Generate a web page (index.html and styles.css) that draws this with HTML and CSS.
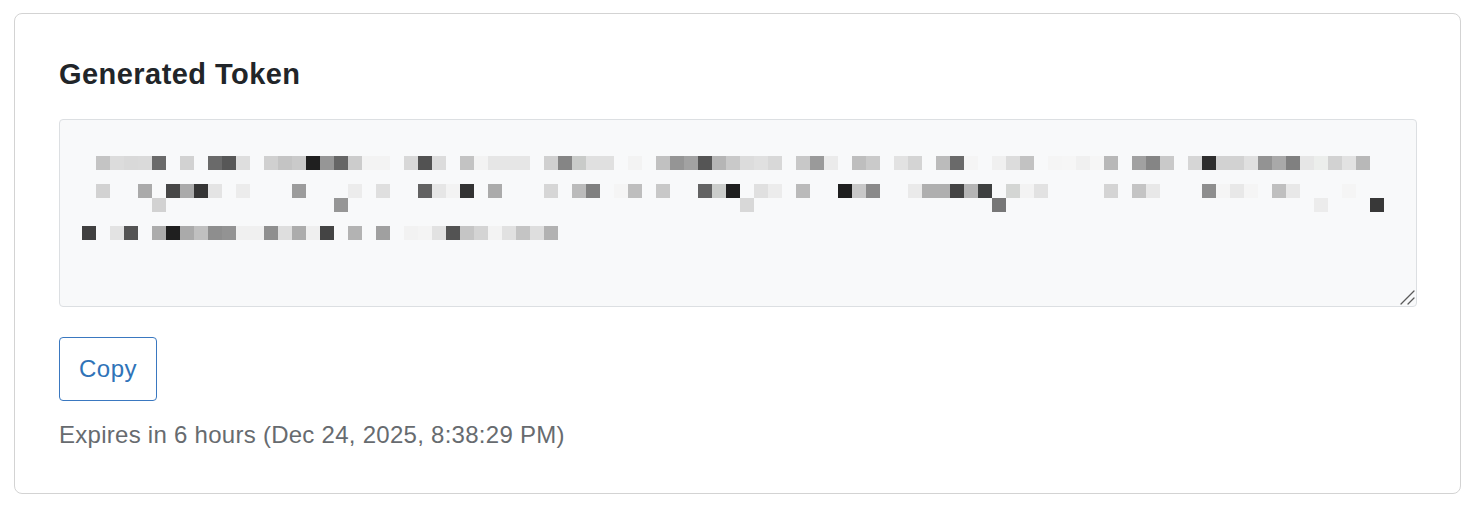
FILE: index.html
```html
<!DOCTYPE html>
<html lang="en">
<head>
<meta charset="utf-8">
<title>Generated Token</title>
<link rel="stylesheet" href="styles.css">
</head>
<body>
<section class="card">
  <h2 class="card-title">Generated Token</h2>
  <div class="token-box" role="textbox" aria-readonly="true" aria-label="Token (redacted)">
    <svg class="mosaic" width="1302" height="84" viewBox="0 0 1302 84" aria-hidden="true">
      <g class="row" transform="translate(0,0)">
        <rect x="14" width="14" height="14" fill="#c4c4c4"/><rect x="28" width="14" height="14" fill="#dcdcdc"/><rect x="42" width="14" height="14" fill="#d9d9d9"/><rect x="56" width="14" height="14" fill="#dadada"/><rect x="70" width="14" height="14" fill="#6a6a6a"/>
        <rect x="98" width="14" height="14" fill="#d2d2d2"/>
        <rect x="126" width="14" height="14" fill="#6a6a6a"/><rect x="140" width="14" height="14" fill="#575757"/><rect x="154" width="14" height="14" fill="#dedede"/>
        <rect x="182" width="14" height="14" fill="#d0d0d0"/><rect x="196" width="14" height="14" fill="#c4c4c4"/><rect x="210" width="14" height="14" fill="#cacaca"/><rect x="224" width="14" height="14" fill="#1f1f1f"/><rect x="238" width="14" height="14" fill="#969696"/><rect x="252" width="14" height="14" fill="#666666"/><rect x="266" width="14" height="14" fill="#cccccc"/><rect x="280" width="14" height="14" fill="#f3f3f3"/><rect x="294" width="14" height="14" fill="#f3f3f3"/>
        <rect x="322" width="14" height="14" fill="#d8d8d8"/><rect x="336" width="14" height="14" fill="#525252"/><rect x="350" width="14" height="14" fill="#dcdcdc"/>
        <rect x="378" width="14" height="14" fill="#c3c3c3"/><rect x="392" width="14" height="14" fill="#f3f3f3"/><rect x="406" width="14" height="14" fill="#e6e6e6"/><rect x="420" width="14" height="14" fill="#e6e6e6"/><rect x="434" width="14" height="14" fill="#e6e6e6"/>
        <rect x="462" width="14" height="14" fill="#d0d0d0"/><rect x="476" width="14" height="14" fill="#858585"/><rect x="490" width="14" height="14" fill="#c9cbc9"/><rect x="504" width="14" height="14" fill="#e0e0e0"/><rect x="518" width="14" height="14" fill="#e0e0e0"/>
        <rect x="546" width="14" height="14" fill="#f3f3f3"/>
        <rect x="574" width="14" height="14" fill="#c1c1c1"/><rect x="588" width="14" height="14" fill="#959595"/><rect x="602" width="14" height="14" fill="#a2a2a2"/><rect x="616" width="14" height="14" fill="#555555"/><rect x="630" width="14" height="14" fill="#b5b5b5"/><rect x="644" width="14" height="14" fill="#c9c9c9"/><rect x="658" width="14" height="14" fill="#dcdcdc"/><rect x="672" width="14" height="14" fill="#e0e0e0"/><rect x="686" width="14" height="14" fill="#d8d8d8"/>
        <rect x="714" width="14" height="14" fill="#c8c8c8"/><rect x="728" width="14" height="14" fill="#9a9a9a"/><rect x="742" width="14" height="14" fill="#ebebeb"/>
        <rect x="770" width="14" height="14" fill="#bebebe"/><rect x="784" width="14" height="14" fill="#cacaca"/>
        <rect x="812" width="14" height="14" fill="#e2e2e2"/><rect x="826" width="14" height="14" fill="#d4d4d4"/>
        <rect x="854" width="14" height="14" fill="#bbbbbb"/><rect x="868" width="14" height="14" fill="#6a6a6a"/><rect x="882" width="14" height="14" fill="#f5f5f5"/>
        <rect x="910" width="14" height="14" fill="#f0f0f0"/><rect x="924" width="14" height="14" fill="#dcdcdc"/><rect x="938" width="14" height="14" fill="#c2c2c2"/>
        <rect x="966" width="14" height="14" fill="#f5f5f5"/><rect x="980" width="14" height="14" fill="#f6f6f6"/><rect x="994" width="14" height="14" fill="#f0f0f0"/><rect x="1008" width="14" height="14" fill="#f6f6f6"/><rect x="1022" width="14" height="14" fill="#b8b8b8"/>
        <rect x="1050" width="14" height="14" fill="#a1a1a1"/><rect x="1064" width="14" height="14" fill="#858585"/><rect x="1078" width="14" height="14" fill="#c9c9c9"/>
        <rect x="1106" width="14" height="14" fill="#d6d6d6"/><rect x="1120" width="14" height="14" fill="#2e2e2e"/><rect x="1134" width="14" height="14" fill="#d2d2d2"/><rect x="1148" width="14" height="14" fill="#d2d2d2"/><rect x="1162" width="14" height="14" fill="#e0e0e0"/><rect x="1176" width="14" height="14" fill="#939393"/><rect x="1190" width="14" height="14" fill="#a9a9a9"/><rect x="1204" width="14" height="14" fill="#808080"/><rect x="1218" width="14" height="14" fill="#e6e6e6"/><rect x="1232" width="14" height="14" fill="#eceeec"/><rect x="1246" width="14" height="14" fill="#d2d2d2"/><rect x="1260" width="14" height="14" fill="#e2e2e2"/><rect x="1274" width="14" height="14" fill="#b8b8b8"/>
      </g>
      <g class="row" transform="translate(0,28)">
        <rect x="14" width="14" height="14" fill="#d2d2d2"/><rect x="56" width="14" height="14" fill="#aaaaaa"/><rect x="84" width="14" height="14" fill="#474747"/><rect x="98" width="14" height="14" fill="#aaaaaa"/><rect x="112" width="14" height="14" fill="#353535"/><rect x="126" width="14" height="14" fill="#e4e4e4"/><rect x="154" width="14" height="14" fill="#ececec"/><rect x="210" width="14" height="14" fill="#9c9c9c"/>
        <rect x="266" width="14" height="14" fill="#ececec"/><rect x="294" width="14" height="14" fill="#dfdfdf"/><rect x="336" width="14" height="14" fill="#626262"/><rect x="350" width="14" height="14" fill="#e6e6e6"/><rect x="364" width="14" height="14" fill="#f3f3f3"/><rect x="378" width="14" height="14" fill="#333333"/><rect x="406" width="14" height="14" fill="#ababab"/>
        <rect x="462" width="14" height="14" fill="#d6d6d6"/><rect x="490" width="14" height="14" fill="#bbbbbb"/><rect x="504" width="14" height="14" fill="#808080"/><rect x="532" width="14" height="14" fill="#f5f5f5"/><rect x="546" width="14" height="14" fill="#bebebe"/><rect x="574" width="14" height="14" fill="#c8c8c8"/><rect x="616" width="14" height="14" fill="#636363"/><rect x="630" width="14" height="14" fill="#cbcdcb"/><rect x="644" width="14" height="14" fill="#1f1f1f"/>
        <rect x="672" width="14" height="14" fill="#e0e0e0"/><rect x="686" width="14" height="14" fill="#ececec"/><rect x="714" width="14" height="14" fill="#bababa"/><rect x="756" width="14" height="14" fill="#1f1f1f"/><rect x="770" width="14" height="14" fill="#c8c8c8"/><rect x="784" width="14" height="14" fill="#8a8a8a"/>
        <rect x="826" width="14" height="14" fill="#eaeaea"/><rect x="840" width="14" height="14" fill="#afafaf"/><rect x="854" width="14" height="14" fill="#afafaf"/><rect x="868" width="14" height="14" fill="#444444"/><rect x="882" width="14" height="14" fill="#b5b5b5"/><rect x="896" width="14" height="14" fill="#3e4040"/>
        <rect x="924" width="14" height="14" fill="#d4d6d4"/><rect x="938" width="14" height="14" fill="#f3f3f3"/><rect x="952" width="14" height="14" fill="#e2e2e2"/><rect x="1022" width="14" height="14" fill="#d4d4d4"/><rect x="1050" width="14" height="14" fill="#c4c4c4"/><rect x="1064" width="14" height="14" fill="#e8e8e8"/>
        <rect x="1120" width="14" height="14" fill="#8e8e8e"/><rect x="1134" width="14" height="14" fill="#f5f5f5"/><rect x="1148" width="14" height="14" fill="#e8e8e8"/><rect x="1162" width="14" height="14" fill="#f5f5f5"/><rect x="1190" width="14" height="14" fill="#bfbfbf"/><rect x="1204" width="14" height="14" fill="#e8e8e8"/><rect x="1260" width="14" height="14" fill="#f5f5f5"/>
      </g>
      <g class="row" transform="translate(0,42)">
        <rect x="70" width="14" height="14" fill="#d2d2d2"/><rect x="252" width="14" height="14" fill="#969696"/><rect x="658" width="14" height="14" fill="#d8d8d8"/><rect x="910" width="14" height="14" fill="#777777"/><rect x="1232" width="14" height="14" fill="#ececec"/><rect x="1288" width="14" height="14" fill="#383838"/>
      </g>
      <g class="row" transform="translate(0,70)">
        <rect x="0" width="14" height="14" fill="#404040"/><rect x="28" width="14" height="14" fill="#e3e3e3"/><rect x="42" width="14" height="14" fill="#545454"/><rect x="70" width="14" height="14" fill="#acacac"/><rect x="84" width="14" height="14" fill="#1f1f1f"/><rect x="98" width="14" height="14" fill="#aaaaaa"/><rect x="112" width="14" height="14" fill="#c0c0c0"/><rect x="126" width="14" height="14" fill="#8e8e8e"/><rect x="140" width="14" height="14" fill="#939393"/><rect x="154" width="14" height="14" fill="#f0f0f0"/><rect x="168" width="14" height="14" fill="#f0f0f0"/><rect x="182" width="14" height="14" fill="#8f8f8f"/><rect x="196" width="14" height="14" fill="#dedede"/><rect x="210" width="14" height="14" fill="#acacac"/>
        <rect x="224" width="14" height="14" fill="#efefef"/><rect x="238" width="14" height="14" fill="#444444"/><rect x="266" width="14" height="14" fill="#b3b3b3"/><rect x="294" width="14" height="14" fill="#a0a0a0"/><rect x="322" width="14" height="14" fill="#f2f2f2"/><rect x="336" width="14" height="14" fill="#f4f4f4"/><rect x="350" width="14" height="14" fill="#e2e2e2"/><rect x="364" width="14" height="14" fill="#535353"/><rect x="378" width="14" height="14" fill="#c5c5c5"/><rect x="392" width="14" height="14" fill="#d4d4d4"/><rect x="406" width="14" height="14" fill="#f3f3f3"/><rect x="420" width="14" height="14" fill="#e1e1e1"/><rect x="434" width="14" height="14" fill="#c4c4c4"/><rect x="448" width="14" height="14" fill="#dedede"/><rect x="462" width="14" height="14" fill="#b2b2b2"/>
      </g>
    </svg>
    <svg class="resize-grip" width="16" height="16" viewBox="0 0 16 16" aria-hidden="true">
      <path d="M2 15 L15 2 M9 15 L15 9" stroke="#5a5a5a" stroke-width="1.3" stroke-linecap="round" fill="none"/>
    </svg>
  </div>
  <button class="btn-copy" type="button">Copy</button>
  <p class="expires">Expires in 6 hours (Dec 24, 2025, 8:38:29 PM)</p>
</section>
</body>
</html>
```

FILE: styles.css
```css
* {
  box-sizing: border-box;
}

html, body {
  background: #ffffff;
}

body {
  margin: 13px 13px 0 14px;
  font-family: "Liberation Sans", Arial, Helvetica, sans-serif;
  color: #212529;
}

.card {
  display: flex;
  flex-direction: column;
  align-items: flex-start;
  border: 1px solid #d3d3d3;
  border-radius: 8px;
  padding: 43px 43px 40px 44px;
  background: #ffffff;
}

.card-title {
  margin: 0;
  font-size: 29px;
  line-height: 35px;
  font-weight: 700;
  letter-spacing: 0.45px;
  color: #212529;
}

.token-box {
  position: relative;
  align-self: stretch;
  margin-top: 27px;
  height: 188px;
  padding: 36px 22px 0 22px;
  background: #f8f9fa;
  border: 1px solid #dcdfe2;
  border-radius: 4px;
  overflow: hidden;
}

.mosaic {
  display: block;
}

.resize-grip {
  position: absolute;
  right: 1px;
  bottom: 1px;
}

.btn-copy {
  margin-top: 30px;
  height: 64px;
  padding: 0 19px;
  font-family: "Liberation Sans", Arial, Helvetica, sans-serif;
  font-size: 24px;
  line-height: 36px;
  letter-spacing: 0.5px;
  color: #2f73b8;
  background: #ffffff;
  border: 1px solid #3a78c0;
  border-radius: 4px;
  cursor: pointer;
}

.expires {
  margin: 16px 0 0 0;
  font-size: 24px;
  line-height: 36px;
  letter-spacing: 0.27px;
  color: #676b6f;
}
```
